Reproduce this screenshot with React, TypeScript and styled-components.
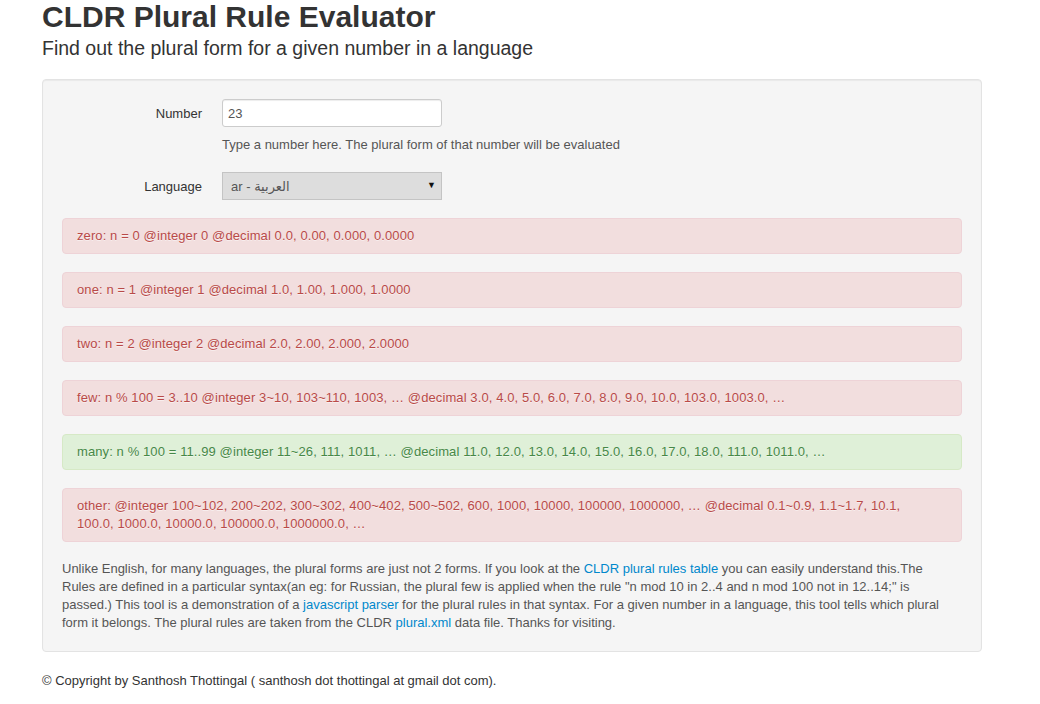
import React from "react";
import styled, { createGlobalStyle } from "styled-components";

const Global = createGlobalStyle`
  html, body { margin: 0; padding: 0; background: #ffffff; }
  body {
    font-family: "Liberation Sans", Arial, Helvetica, sans-serif;
    font-size: 13px;
    line-height: 18px;
    color: #333333;
  }
  * { box-sizing: border-box; }
`;

const Container = styled.div`
  width: 940px;
  margin-left: 42px;
`;

const Title = styled.h1`
  margin: 0;
  font-size: 30px;
  line-height: 34px;
  font-weight: bold;
  color: #333333;
`;

const Subtitle = styled.div`
  margin-top: 2px;
  font-size: 19.5px;
  line-height: 24px;
  color: #333333;
`;

const Well = styled.div`
  margin-top: 19px;
  margin-bottom: 20px;
  padding: 19px;
  background: #f5f5f5;
  border: 1px solid #e3e3e3;
  border-radius: 4px;
  box-shadow: inset 0 1px 1px rgba(0, 0, 0, 0.05);
`;

const ControlGroup = styled.div<{ $mb: number }>`
  display: flex;
  align-items: flex-start;
  gap: 20px;
  margin-bottom: ${(p) => p.$mb}px;
`;

const ControlLabel = styled.label`
  width: 140px;
  padding-top: 6px;
  text-align: right;
  color: #333333;
`;

const Controls = styled.div`
  display: flex;
  flex-direction: column;
`;

const TextInput = styled.input`
  width: 220px;
  height: 28px;
  padding: 4px 5px;
  font-family: "Liberation Sans", Arial, sans-serif;
  font-size: 13px;
  line-height: 18px;
  color: #555555;
  background: #ffffff;
  border: 1px solid #cccccc;
  border-radius: 3px;
  box-shadow: inset 0 1px 1px rgba(0, 0, 0, 0.075);
  outline: none;
`;

const HelpBlock = styled.p`
  margin: 9px 0 0;
  color: #555555;
`;

const SelectWrap = styled.div`
  position: relative;
  width: 220px;
  height: 28px;
`;

const Select = styled.select`
  appearance: none;
  width: 220px;
  height: 28px;
  padding: 4px 8px;
  font-family: "Liberation Sans", "DejaVu Sans", Arial, sans-serif;
  font-size: 13px;
  color: #555555;
  background: #dddddd;
  border: 1px solid #c4c4c4;
  border-radius: 0;
  outline: none;
`;

const Arrow = styled.span`
  position: absolute;
  right: 6px;
  top: 7px;
  font-size: 9px;
  line-height: 12px;
  color: #111111;
  pointer-events: none;
`;

const Alert = styled.div<{ $kind: "error" | "success" }>`
  padding: 8px 35px 8px 14px;
  margin-bottom: 18px;
  border-radius: 4px;
  letter-spacing: 0.1px;
  border: 1px solid ${(p) => (p.$kind === "success" ? "#d6e9c6" : "#eed3d7")};
  background: ${(p) => (p.$kind === "success" ? "#dff0d8" : "#f2dede")};
  color: ${(p) => (p.$kind === "success" ? "#468847" : "#b94a48")};
  text-shadow: 0 1px 0 rgba(255, 255, 255, 0.5);
`;

const Rules = styled.div`
  margin-top: 18px;
`;

const Paragraph = styled.p`
  margin: 0;
  max-width: 885px;
  color: #555555;
`;

const Link = styled.a`
  color: #0088cc;
  text-decoration: none;
`;

const Footer = styled.p`
  margin: 0;
  color: #333333;
`;

const rules: { text: string; match: boolean }[] = [
  { text: "zero: n = 0 @integer 0 @decimal 0.0, 0.00, 0.000, 0.0000", match: false },
  { text: "one: n = 1 @integer 1 @decimal 1.0, 1.00, 1.000, 1.0000", match: false },
  { text: "two: n = 2 @integer 2 @decimal 2.0, 2.00, 2.000, 2.0000", match: false },
  {
    text: "few: n % 100 = 3..10 @integer 3~10, 103~110, 1003, … @decimal 3.0, 4.0, 5.0, 6.0, 7.0, 8.0, 9.0, 10.0, 103.0, 1003.0, …",
    match: false,
  },
  {
    text: "many: n % 100 = 11..99 @integer 11~26, 111, 1011, … @decimal 11.0, 12.0, 13.0, 14.0, 15.0, 16.0, 17.0, 18.0, 111.0, 1011.0, …",
    match: true,
  },
  {
    text: "other: @integer 100~102, 200~202, 300~302, 400~402, 500~502, 600, 1000, 10000, 100000, 1000000, … @decimal 0.1~0.9, 1.1~1.7, 10.1, 100.0, 1000.0, 10000.0, 100000.0, 1000000.0, …",
    match: false,
  },
];

export default function App() {
  return (
    <>
      <Global />
      <Container>
        <Title>CLDR Plural Rule Evaluator</Title>
        <Subtitle>Find out the plural form for a given number in a language</Subtitle>
        <Well>
          <ControlGroup $mb={18}>
            <ControlLabel htmlFor="number">Number</ControlLabel>
            <Controls>
              <TextInput id="number" defaultValue="23" />
              <HelpBlock>Type a number here. The plural form of that number will be evaluated</HelpBlock>
            </Controls>
          </ControlGroup>
          <ControlGroup $mb={0}>
            <ControlLabel htmlFor="language">Language</ControlLabel>
            <Controls>
              <SelectWrap>
                <Select id="language" defaultValue="ar">
                  <option value="ar">ar - العربية</option>
                </Select>
                <Arrow>▼</Arrow>
              </SelectWrap>
            </Controls>
          </ControlGroup>
          <Rules>
            {rules.map((r) => (
              <Alert key={r.text} $kind={r.match ? "success" : "error"}>
                {r.text}
              </Alert>
            ))}
          </Rules>
          <Paragraph>
            Unlike English, for many languages, the plural forms are just not 2 forms. If you look at the{" "}
            <Link href="#">CLDR plural rules table</Link> you can easily understand this.The Rules are defined in a
            particular syntax(an eg: for Russian, the plural few is applied when the rule "n mod 10 in 2..4 and n mod
            100 not in 12..14;" is passed.) This tool is a demonstration of a <Link href="#">javascript parser</Link>{" "}
            for the plural rules in that syntax. For a given number in a language, this tool tells which plural form it
            belongs. The plural rules are taken from the CLDR <Link href="#">plural.xml</Link> data file. Thanks for
            visiting.
          </Paragraph>
        </Well>
        <Footer>© Copyright by Santhosh Thottingal ( santhosh dot thottingal at gmail dot com).</Footer>
      </Container>
    </>
  );
}
